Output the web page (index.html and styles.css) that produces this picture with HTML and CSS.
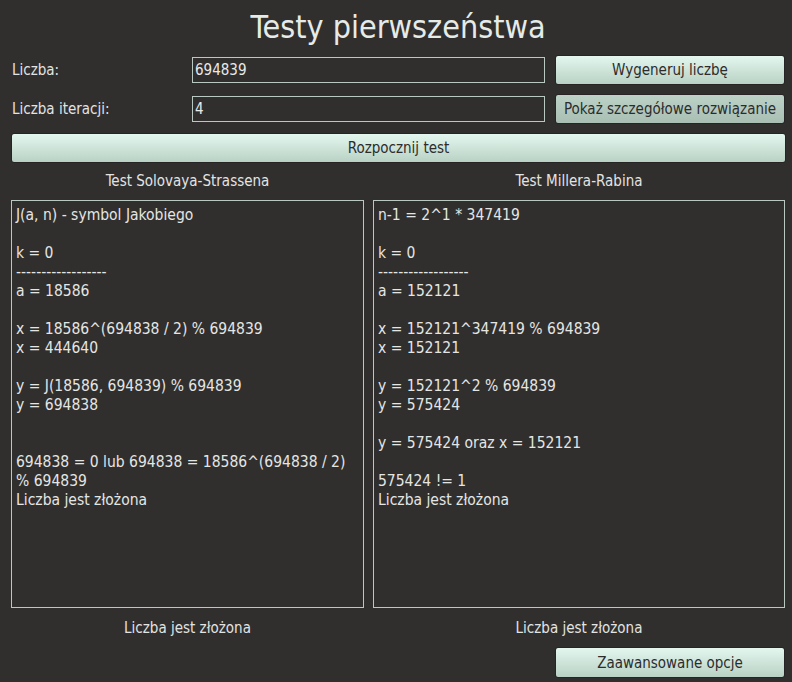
FILE: index.html
```html
<!DOCTYPE html>
<html lang="pl">
<head>
<meta charset="utf-8">
<title>Testy pierwszeństwa</title>
<link rel="stylesheet" href="styles.css">
</head>
<body>
<div class="app">
  <h1 class="title">Testy pierwszeństwa</h1>
  <div class="form">
    <label class="label" for="num">Liczba:</label>
    <div class="field" id="num">694839</div>
    <button class="btn">Wygeneruj liczbę</button>
    <label class="label" for="iter">Liczba iteracji:</label>
    <div class="field" id="iter">4</div>
    <button class="btn btn-pressed">Pokaż szczegółowe rozwiązanie</button>
  </div>
  <button class="btn btn-start">Rozpocznij test</button>
  <div class="tests">
    <div class="col">
      <div class="col-title">Test Solovaya-Strassena</div>
      <div class="output">J(a, n) - symbol Jakobiego

k = 0
------------------
a = 18586

x = 18586^(694838 / 2) % 694839
x = 444640

y = J(18586, 694839) % 694839
y = 694838


694838 = 0 lub 694838 = 18586^(694838 / 2) % 694839
Liczba jest złożona</div>
      <div class="result">Liczba jest złożona</div>
    </div>
    <div class="col">
      <div class="col-title">Test Millera-Rabina</div>
      <div class="output">n-1 = 2^1 * 347419

k = 0
------------------
a = 152121

x = 152121^347419 % 694839
x = 152121

y = 152121^2 % 694839
y = 575424

y = 575424 oraz x = 152121

575424 != 1
Liczba jest złożona</div>
      <div class="result">Liczba jest złożona</div>
    </div>
  </div>
  <div class="footer">
    <button class="btn btn-adv">Zaawansowane opcje</button>
  </div>
</div>
</body>
</html>
```

FILE: styles.css
```css
html, body {
  margin: 0;
  padding: 0;
  background: #312e2e;
}
body {
  font-family: "DejaVu Sans Condensed", "DejaVu Sans", sans-serif;
  font-stretch: condensed;
  font-size: 15px;
  color: #e2e4e2;
  width: 792px;
  height: 682px;
  overflow: hidden;
}
.app {
  padding: 0 7px 0 11px;
}
.title {
  margin: 0;
  height: 55px;
  box-sizing: border-box;
  padding-top: 7px;
  text-align: center;
  font-weight: normal;
  font-size: 32px;
  line-height: 40px;
  color: #e6ebe8;
}
.form {
  display: grid;
  grid-template-columns: 171px 353px 230px;
  column-gap: 10px;
  row-gap: 9px;
  align-items: center;
}
.label {
  padding-left: 1px;
  line-height: 30px;
}
.field {
  height: 26px;
  box-sizing: border-box;
  border: 1px solid #b9c9c1;
  padding: 0 2px;
  line-height: 24px;
  color: #e8eae8;
}
.btn {
  font-family: inherit;
  font-stretch: condensed;
  font-size: 15px;
  color: #2c2c2c;
  height: 30px;
  border: 1px solid #262424;
  border-radius: 3px;
  background: linear-gradient(#e3f7ee, #b9d1c5);
  padding: 0;
  margin: 0;
  white-space: nowrap;
}
.btn-pressed {
  background: linear-gradient(#bdd2c7, #a9bfb4);
}
.btn-start {
  display: block;
  width: 775px;
  margin-top: 9px;
}
.tests {
  display: grid;
  grid-template-columns: 353px 412px;
  column-gap: 9px;
}
.col-title {
  text-align: center;
  height: 37px;
  line-height: 37px;
}
.output {
  height: 408px;
  box-sizing: border-box;
  border: 1px solid #b9c9c1;
  padding: 5px 4px;
  white-space: pre-wrap;
  font-size: 15.5px;
  line-height: 19px;
  color: #e4e6e4;
}
.result {
  text-align: center;
  height: 39px;
  line-height: 40px;
}
.footer {
  display: flex;
  justify-content: flex-end;
}
.btn-adv {
  width: 230px;
  height: 31px;
}
```
